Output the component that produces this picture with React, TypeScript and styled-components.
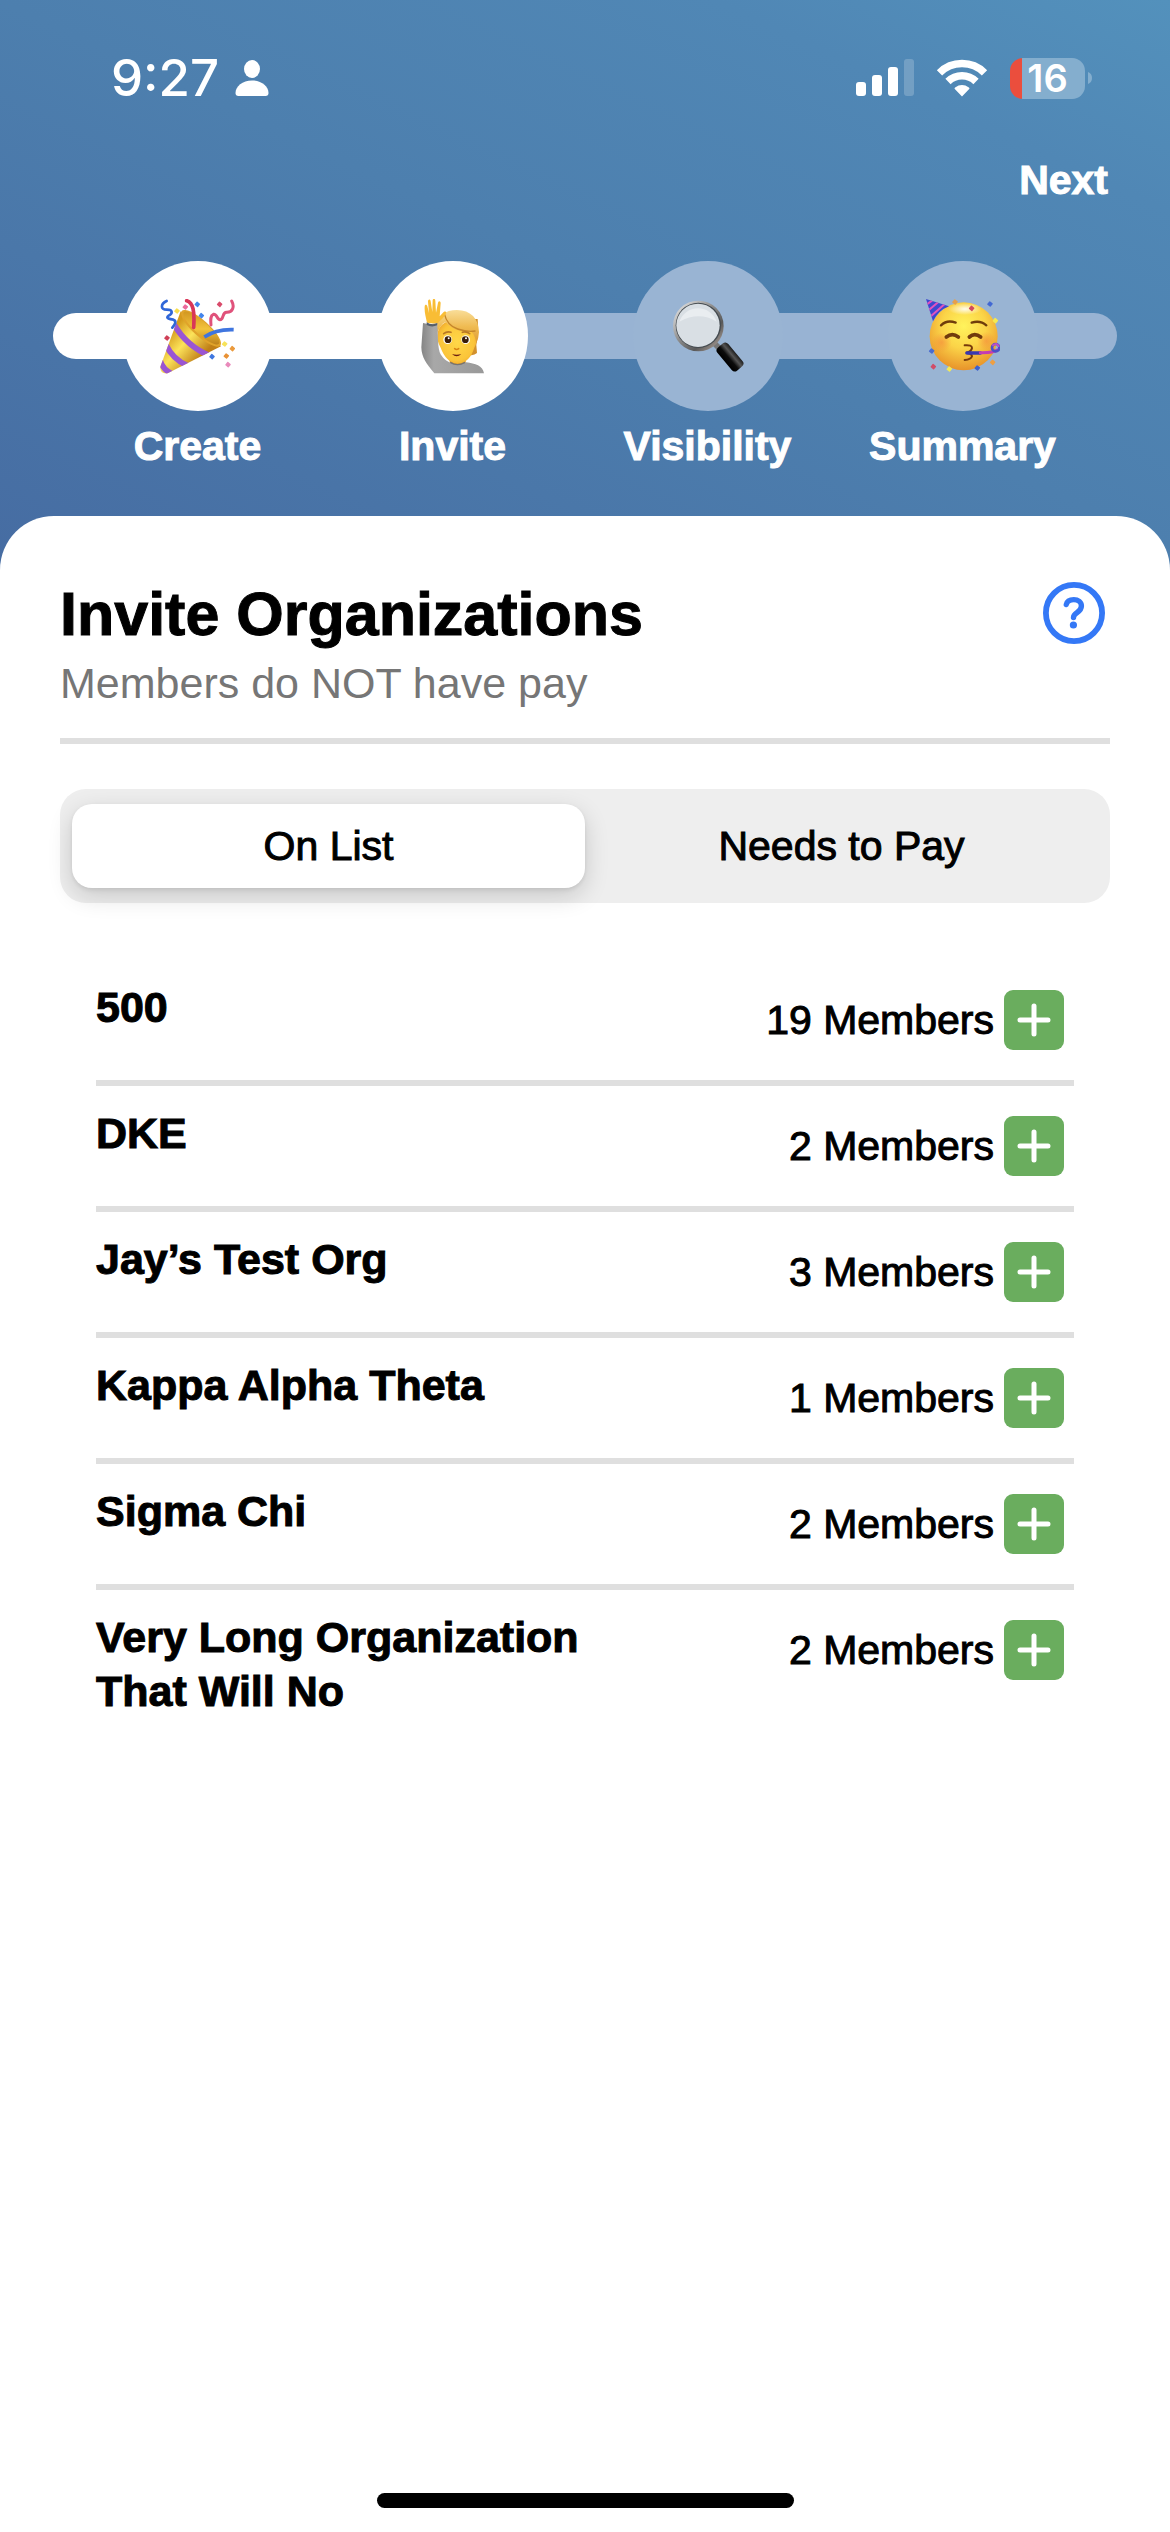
import React, { useState } from "react";
import styled, { createGlobalStyle } from "styled-components";

const GlobalStyle = createGlobalStyle`
  *, *::before, *::after { box-sizing: border-box; }
  body {
    margin: 0;
    background: #fff;
    color: #000;
    font-family: "Liberation Sans", Arial, Helvetica, sans-serif;
  }
  button {
    margin: 0;
    padding: 0;
    border: 0;
    background: none;
    color: inherit;
    font: inherit;
    cursor: pointer;
  }
`;

const Screen = styled.div`
  display: flex;
  flex-direction: column;
  min-height: 100vh;
`;

const Header = styled.header`
  padding-bottom: 100px;
  color: #fff;
  background: linear-gradient(25deg, #466ca2 0%, #4d7fae 51%, #5087b5 81%, #5391bc 100%);
`;

const StatusBar = styled.div`
  display: flex;
  align-items: center;
  justify-content: space-between;
  height: 156px;
  padding: 0 78px 0 111px;
  font-family: Inter, "Liberation Sans", sans-serif;
`;

const StatusGroup = styled.div<{ $gap: number }>`
  display: flex;
  align-items: center;
  gap: ${(p) => p.$gap}px;
`;

const Time = styled.span`
  font-size: 51px;
  font-weight: 500;
  line-height: 60px;
`;

const Battery = styled.div`
  display: flex;
  align-items: center;
  gap: 3px;
`;

const BatteryBody = styled.div`
  display: flex;
  align-items: center;
  justify-content: center;
  width: 75px;
  height: 41px;
  border-radius: 13px;
  background: linear-gradient(to right, #eb4e3d 12px, #84aece 12px);
  font-size: 38px;
  font-weight: 600;
  line-height: 41px;
`;

const NavBar = styled.nav`
  display: flex;
  justify-content: flex-end;
  padding: 0 62px;
`;

const NextButton = styled.button`
  font-size: 41px;
  font-weight: 700;
  line-height: 48px;
  -webkit-text-stroke: 1px currentColor;
`;

const Stepper = styled.ol`
  position: relative;
  display: flex;
  margin: 57px 0 0;
  padding: 0 80px 0 70px;
  list-style: none;
`;

const Track = styled.li`
  position: absolute;
  top: 52px;
  left: 53px;
  right: 53px;
  height: 46px;
  border-radius: 23px;
  background: linear-gradient(to right, #fff 40%, #98b3d3 40%);
`;

const Step = styled.li`
  position: relative;
  display: flex;
  flex: 1;
  flex-direction: column;
  align-items: center;
  gap: 11px;
`;

const StepCircle = styled.div<{ $done: boolean }>`
  display: flex;
  align-items: center;
  justify-content: center;
  width: 150px;
  height: 150px;
  border-radius: 50%;
  background: ${(p) => (p.$done ? "#fff" : "#99b4d3")};
`;

const StepLabel = styled.span`
  font-size: 41px;
  font-weight: 700;
  line-height: 48px;
  -webkit-text-stroke: 1px currentColor;
`;

const Sheet = styled.main`
  display: flex;
  flex: 1;
  flex-direction: column;
  margin-top: -54px;
  padding: 66px 60px 24px;
  border-radius: 54px 54px 0 0;
  background: #fff;
`;

const SheetHeader = styled.div`
  display: flex;
  align-items: flex-start;
  justify-content: space-between;
  padding: 0 5px 28px 0;
  border-bottom: 6px solid #dfdfdf;
`;

const Title = styled.h1`
  margin: 0;
  font-size: 61px;
  font-weight: 700;
  line-height: 64px;
  -webkit-text-stroke: 1px currentColor;
`;

const Subtitle = styled.p`
  margin: 10px 0 0;
  color: #767676;
  font-size: 43px;
  line-height: 54px;
`;

const HelpButton = styled.button`
  display: flex;
  border-radius: 50%;
`;

const Tabs = styled.div`
  display: grid;
  grid-template-columns: 1fr 1fr;
  margin-top: 45px;
  padding: 15px 12px;
  border-radius: 26px;
  background: #eee;
`;

const Tab = styled.button<{ $active: boolean }>`
  height: 84px;
  border-radius: 20px;
  background: ${(p) => (p.$active ? "#fff" : "transparent")};
  box-shadow: ${(p) =>
    p.$active ? "0 8px 24px rgba(0, 0, 0, 0.16), 0 2px 4px rgba(0, 0, 0, 0.08)" : "none"};
  font-size: 41px;
  line-height: 48px;
  -webkit-text-stroke: 1px currentColor;
`;

const OrgList = styled.ul`
  margin: 57px 36px 0;
  padding: 0;
  list-style: none;
`;

const OrgRow = styled.li`
  display: flex;
  align-items: flex-start;
  justify-content: space-between;
  min-height: 126px;
  padding: 20px 10px 20px 0;
  & + & {
    border-top: 6px solid #dfdfdf;
  }
  &:first-child {
    min-height: 120px;
  }
`;

const OrgName = styled.span`
  max-width: 520px;
  font-size: 43px;
  font-weight: 700;
  line-height: 54px;
  -webkit-text-stroke: 1px currentColor;
`;

const OrgActions = styled.div`
  display: flex;
  align-items: center;
  gap: 10px;
  padding-top: 10px;
`;

const MemberCount = styled.span`
  font-size: 41px;
  line-height: 48px;
  -webkit-text-stroke: 1px currentColor;
`;

const AddButton = styled.button`
  display: flex;
  align-items: center;
  justify-content: center;
  width: 60px;
  height: 60px;
  border-radius: 9px;
  background: #6aad5e;
`;

const HomeIndicator = styled.div`
  width: 417px;
  height: 15px;
  margin: auto auto 0;
  border-radius: 8px;
  background: #000;
`;

const PersonIcon = () => (
  <svg width="34" height="36" viewBox="0 0 34 36" fill="#fff" aria-hidden="true">
    <ellipse cx="17" cy="9" rx="8" ry="9" />
    <path d="M17 20.500c9.500 0 16.500 6 16.500 12.500 0 2-1 3-3 3h-27c-2 0-3-1-3-3C.5 26.500 7.500 20.500 17 20.500z" />
  </svg>
);

const SignalIcon = () => (
  <svg width="58" height="38" viewBox="0 0 58 38" fill="#fff" aria-hidden="true">
    <rect x="0" y="23" width="10" height="14" rx="3" />
    <rect x="16" y="16" width="10" height="21" rx="3" />
    <rect x="32" y="8" width="10" height="29" rx="3" />
    <rect x="48" y="0" width="10" height="37" rx="3" opacity="0.2" />
  </svg>
);

const WifiIcon = () => (
  <svg width="52" height="38" viewBox="0 0 52 38" aria-hidden="true">
    <g fill="none" stroke="#fff" strokeWidth="7.500">
      <path d="M3.500 13.800a32 32 0 0 1 45 0" />
      <path d="M12 22.500a20 20 0 0 1 28 0" />
    </g>
    <path d="M26 37.500l-7.200-7.400q-.8-1 .3-1.700a12.500 12.500 0 0 1 13.800 0q1.100.7.3 1.700z" fill="#fff" />
  </svg>
);

const BatteryTip = () => (
  <svg width="4" height="12" viewBox="0 0 4 12" aria-hidden="true">
    <path d="M0 0q4 1.500 4 6t-4 6z" fill="#84aece" />
  </svg>
);

const HelpIcon = () => (
  <svg width="62" height="62" viewBox="0 0 62 62" fill="none" stroke="#3478f6" aria-hidden="true">
    <circle cx="31" cy="31" r="28.100" strokeWidth="5.800" />
    <path
      d="M23.300 22.500c.8-3.600 4-4.900 7.500-4.900 4.200 0 7.600 2.500 7.600 6.400 0 3.200-1.900 4.900-4.200 6.500-2.500 1.700-3.700 3-3.700 5"
      strokeWidth="5.400"
      strokeLinecap="round"
    />
    <circle cx="30.400" cy="43" r="3.600" fill="#3478f6" stroke="none" />
  </svg>
);

const PlusIcon = () => (
  <svg width="34" height="34" viewBox="0 0 34 34" fill="none" stroke="#fff" strokeWidth="5" strokeLinecap="round" aria-hidden="true">
    <path d="M17 3v28M3 17h28" />
  </svg>
);

const Diamonds = ({ items }: { items: [number, number, string][] }) => (
  <>
    {items.map(([x, y, fill]) => (
      <rect key={`${x}-${y}`} x={x - 6.500} y={y - 6.500} width="13" height="13" rx="2" fill={fill} transform={`rotate(40 ${x} ${y})`} />
    ))}
  </>
);

const PartyIcon = () => (
  <svg width="75" height="75" viewBox="0 0 225 225" aria-hidden="true">
    <defs>
      <linearGradient id="cone" x1="20" y1="110" x2="110" y2="190" gradientUnits="userSpaceOnUse">
        <stop offset="0" stopColor="#d59a1c" />
        <stop offset="0.45" stopColor="#fce35a" />
        <stop offset="1" stopColor="#c07f17" />
      </linearGradient>
      <linearGradient id="mouth" x1="80" y1="40" x2="170" y2="140" gradientUnits="userSpaceOnUse">
        <stop offset="0" stopColor="#c88a1a" />
        <stop offset="0.5" stopColor="#f3c33b" />
        <stop offset="1" stopColor="#a5650e" />
      </linearGradient>
      <clipPath id="coneClip">
        <path d="M62 37L1 203q-2 22 22 20L183 142Z" />
      </clipPath>
    </defs>
    <path d="M62 37L1 203q-2 22 22 20L183 142Z" fill="url(#cone)" />
    <g clipPath="url(#coneClip)" fill="none" stroke="#9a55d3" strokeWidth="17">
      <path d="M43 78q38 64 106 92" />
      <path d="M18 138q20 42 64 62" />
      <path d="M0 184q8 28 38 42" />
    </g>
    <ellipse cx="123" cy="88" rx="78" ry="24" transform="rotate(42 123 88)" fill="#e0a32a" />
    <ellipse cx="124" cy="87" rx="71" ry="19" transform="rotate(42 124 87)" fill="url(#mouth)" />
    <g fill="none" strokeLinecap="round">
      <path d="M20 6C2 14 0 32 20 32s18 12 6 18c-12 8 6 11 14 12 12 4 4 16-3 24" stroke="#2f66d8" strokeWidth="8" />
      <path d="M80 5c20 6 24 32 21 80" stroke="#d93658" strokeWidth="11" />
      <path d="M215 6c10 18 2 34-14 34-16-2-8 22-21 22-10 0-8-18-20-16-10 4-8 18-7 32" stroke="#e0527b" strokeWidth="9" />
      <path d="M133 114q35-24 88-22" stroke="#3f75df" strokeWidth="11" strokeLinecap="butt" />
    </g>
    <Diamonds
      items={[
        [112, 16, "#4385ec"], [124, 50, "#4385ec"], [76, 24, "#ea6b9c"], [51, 36, "#f7de4d"],
        [179, 16, "#d94b6b"], [21, 117, "#cf3f57"], [194, 135, "#f7e35a"], [217, 149, "#eb9a3c"],
        [199, 171, "#e99236"], [156, 173, "#3f77e0"], [204, 197, "#e98abb"],
      ]}
    />
  </svg>
);

const HandRaisedIcon = () => (
  <svg width="75" height="75" viewBox="0 0 225 225" aria-hidden="true">
    <defs>
      <radialGradient id="skin" cx="0.5" cy="0.5" r="0.6">
        <stop offset="0" stopColor="#ffd748" />
        <stop offset="0.7" stopColor="#fbc53a" />
        <stop offset="1" stopColor="#eda32a" />
      </radialGradient>
      <linearGradient id="hair" x1="0" y1="0" x2="0" y2="1">
        <stop offset="0" stopColor="#f9dd98" />
        <stop offset="0.5" stopColor="#efbb52" />
        <stop offset="1" stopColor="#dc9a33" />
      </linearGradient>
      <linearGradient id="sleeve" x1="0" y1="0" x2="1" y2="0">
        <stop offset="0" stopColor="#858585" />
        <stop offset="0.2" stopColor="#a8a8a8" />
        <stop offset="1" stopColor="#999" />
      </linearGradient>
    </defs>
    <path d="M150 60h38q4 40-4 78l2 24q-8 8-22 6z" fill="#d2912d" />
    <path d="M104 170h48v26q-24 14-48 0z" fill="#dd9521" />
    <path d="M67 108q4-44 58-46 54 2 60 46 3 20-7 38-14 46-51 48-34-4-50-48-12-20-10-38z" fill="url(#skin)" />
    <path d="M66 104q-5-36 18-58 14-13 42-13 62 2 66 66-1 20-8 34-4-26-14-34-28 2-50-8-18-8-28-22-10 4-16 14-8 12-10 21z" fill="url(#hair)" />
    <path d="M88 44q8 36 40 46 30 10 52 6" fill="none" stroke="#c58628" strokeWidth="4" strokeLinecap="round" />
    <path d="M36 71c-4-20-8-30-7-48 0-8 7-7 8-1l5 20-3-34c0-8 7-9 8-1l5 32 1-35c1-7 8-6 8 1l2 36 6-30c2-6 8-5 8 2l-3 39 12-13c5-3 9 0 7 4-10 20-20 22-26 32z" fill="#f9bd35" />
    <path d="M24 72q22 7 42 0c4 34 1 62 8 88 8 18 22 28 38 34q22 8 42-4c26 4 50 10 53 33H58C34 194 20 176 19 145z" fill="url(#sleeve)" />
    <path d="M35 70q16 10 32 2v7q-17 7-32-1z" fill="#555e69" />
    <path d="M106 190q21 14 44 0" fill="none" stroke="#747474" strokeWidth="4" />
    <circle cx="98" cy="122" r="13" fill="#fff" />
    <circle cx="152" cy="122" r="13" fill="#fff" />
    <circle cx="99" cy="122" r="10" fill="#3a1d08" />
    <circle cx="151" cy="122" r="10" fill="#3a1d08" />
    <circle cx="101" cy="118" r="3" fill="#fff" />
    <circle cx="153" cy="118" r="3" fill="#fff" />
    <g fill="none" strokeLinecap="round">
      <path d="M86 104q10-8 22-4M142 100q12-4 22 4" stroke="#b87825" strokeWidth="5" />
      <path d="M119 149q6 5 12 0" stroke="#d88413" strokeWidth="5" />
    </g>
    <path d="M111 165q14 4 28 0-14 14-28 0z" fill="#6b2112" />
  </svg>
);

const MagnifierIcon = () => (
  <svg width="75" height="75" viewBox="0 0 225 225" aria-hidden="true">
    <defs>
      <linearGradient id="rim" x1="0" y1="0" x2="1" y2="1">
        <stop offset="0" stopColor="#f3f3f3" />
        <stop offset="0.45" stopColor="#8b8b8b" />
        <stop offset="0.7" stopColor="#595959" />
        <stop offset="1" stopColor="#c9b8ad" />
      </linearGradient>
      <linearGradient id="grip" x1="0" y1="0" x2="0" y2="1">
        <stop offset="0" stopColor="#1c1c1c" />
        <stop offset="0.3" stopColor="#555" />
        <stop offset="0.6" stopColor="#0c0c0c" />
        <stop offset="1" stopColor="#000" />
      </linearGradient>
    </defs>
    <path d="M128 128l26 26" stroke="#777" strokeWidth="17" />
    <circle cx="85" cy="81" r="76" fill="url(#rim)" />
    <circle cx="85" cy="79" r="68" fill="#444b50" />
    <circle cx="84" cy="79" r="65" fill="#d9dfe4" />
    <path d="M28 68a59 59 0 0 1 112 0q-52-32-112 0z" fill="#e9edf0" />
    <rect x="135" y="153" width="90" height="42" rx="12" transform="rotate(50 180 174)" fill="url(#grip)" />
  </svg>
);

const PartyFaceIcon = () => (
  <svg width="75" height="75" viewBox="0 0 225 225" aria-hidden="true">
    <defs>
      <radialGradient id="face" cx="0.5" cy="0.35" r="0.65">
        <stop offset="0" stopColor="#fff35c" />
        <stop offset="0.5" stopColor="#fbd448" />
        <stop offset="1" stopColor="#e8932a" />
      </radialGradient>
      <radialGradient id="blush">
        <stop offset="0" stopColor="#f58a3c" stopOpacity="0.6" />
        <stop offset="1" stopColor="#f58a3c" stopOpacity="0" />
      </radialGradient>
      <radialGradient id="shine">
        <stop offset="0" stopColor="#fff" stopOpacity="0.9" />
        <stop offset="1" stopColor="#fff" stopOpacity="0" />
      </radialGradient>
      <clipPath id="hatClip">
        <path d="M3 0L24 67Q40 34 72 22Z" />
      </clipPath>
    </defs>
    <circle cx="116" cy="112" r="102" fill="url(#face)" />
    <ellipse cx="120" cy="30" rx="50" ry="18" fill="url(#shine)" />
    <circle cx="50" cy="130" r="30" fill="url(#blush)" />
    <circle cx="184" cy="126" r="28" fill="url(#blush)" />
    <path d="M3 0L24 67Q40 34 72 22Z" fill="#3d48cf" />
    <g clipPath="url(#hatClip)" fill="none" stroke="#e252bd" strokeWidth="6">
      <path d="M3 18L22 4M8 36L40 9M15 54L60 14" />
    </g>
    <g fill="none" strokeLinecap="round">
      <path d="M48 79q18-18 44-8M140 71q26-8 44 8" stroke="#6f3d0b" strokeWidth="7" />
      <path d="M64 114q18-14 36 0M133 114q16-14 34 0" stroke="#713b0d" strokeWidth="11" />
      <path d="M119 139q22-2 22 8-2 12-18 14 18 2 18 11-3 10-22 11" stroke="#76390b" strokeWidth="6" />
      <path d="M126 162h40" stroke="#3937b1" strokeWidth="11" />
      <path d="M166 161q38 1 51-8" stroke="#c33cb4" strokeWidth="9" />
      <circle cx="212" cy="146" r="11" stroke="#4b50c7" strokeWidth="8" />
      <path d="M204 139q10-9 17 2" stroke="#bd4fc6" strokeWidth="6" />
    </g>
    <Diamonds
      items={[
        [90, 9, "#e7a04a"], [140, 28, "#d24a5d"], [195, 15, "#4168d3"], [211, 65, "#f5e94f"],
        [20, 156, "#4b6bd0"], [25, 203, "#d04d69"], [73, 210, "#f2e957"], [157, 207, "#3d60cf"], [203, 190, "#ef9f42"],
      ]}
    />
  </svg>
);

const steps = [
  { label: "Create", done: true, Icon: PartyIcon },
  { label: "Invite", done: true, Icon: HandRaisedIcon },
  { label: "Visibility", done: false, Icon: MagnifierIcon },
  { label: "Summary", done: false, Icon: PartyFaceIcon },
];

const tabs = ["On List", "Needs to Pay"];

const organizations = [
  { name: "500", members: 19 },
  { name: "DKE", members: 2 },
  { name: "Jay’s Test Org", members: 3 },
  { name: "Kappa Alpha Theta", members: 1 },
  { name: "Sigma Chi", members: 2 },
  { name: "Very Long Organization That Will No", members: 2 },
];

export default function App() {
  const [activeTab, setActiveTab] = useState(tabs[0]);

  return (
    <Screen>
      <GlobalStyle />
      <Header>
        <StatusBar>
          <StatusGroup $gap={16}>
            <Time>9:27</Time>
            <PersonIcon />
          </StatusGroup>
          <StatusGroup $gap={22}>
            <SignalIcon />
            <WifiIcon />
            <Battery>
              <BatteryBody>16</BatteryBody>
              <BatteryTip />
            </Battery>
          </StatusGroup>
        </StatusBar>
        <NavBar>
          <NextButton type="button">Next</NextButton>
        </NavBar>
        <Stepper>
          <Track aria-hidden="true" />
          {steps.map(({ label, done, Icon }) => (
            <Step key={label}>
              <StepCircle $done={done}>
                <Icon />
              </StepCircle>
              <StepLabel>{label}</StepLabel>
            </Step>
          ))}
        </Stepper>
      </Header>
      <Sheet>
        <SheetHeader>
          <div>
            <Title>Invite Organizations</Title>
            <Subtitle>Members do NOT have pay</Subtitle>
          </div>
          <HelpButton type="button" aria-label="Help">
            <HelpIcon />
          </HelpButton>
        </SheetHeader>
        <Tabs role="tablist">
          {tabs.map((tab) => (
            <Tab
              key={tab}
              type="button"
              role="tab"
              aria-selected={tab === activeTab}
              $active={tab === activeTab}
              onClick={() => setActiveTab(tab)}
            >
              {tab}
            </Tab>
          ))}
        </Tabs>
        <OrgList>
          {organizations.map(({ name, members }) => (
            <OrgRow key={name}>
              <OrgName>{name}</OrgName>
              <OrgActions>
                <MemberCount>{members} Members</MemberCount>
                <AddButton type="button" aria-label={`Add ${name}`}>
                  <PlusIcon />
                </AddButton>
              </OrgActions>
            </OrgRow>
          ))}
        </OrgList>
        <HomeIndicator />
      </Sheet>
    </Screen>
  );
}
